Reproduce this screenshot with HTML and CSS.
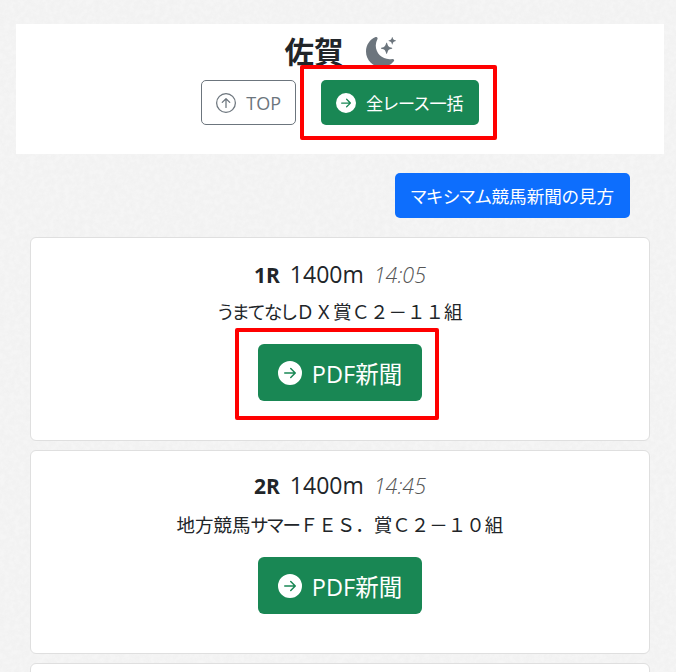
FILE: index.html
```html
<!DOCTYPE html>
<html lang="ja">
<head>
    <meta charset="UTF-8">
    <meta name="viewport" content="width=device-width, initial-scale=1.0">
    <title>佐賀</title>
    <link rel="stylesheet" href="styles.css">
</head>
<body>
    <div class="container">
        <header class="venue">
            <h1 class="venue-title">
                佐賀
                <svg class="moon" viewBox="0 0 16 16" fill="#6c757d">
                    <path d="M6 .278a.768.768 0 0 1 .08.858 7.208 7.208 0 0 0-.878 3.46c0 4.021 3.278 7.277 7.318 7.277.527 0 1.04-.055 1.533-.16a.787.787 0 0 1 .81.316.733.733 0 0 1-.031.893A8.349 8.349 0 0 1 8.344 16C3.734 16 0 12.286 0 7.71 0 4.266 2.114 1.312 5.124.06A.752.752 0 0 1 6 .278z"/>
                    <path d="M10.794 3.148a.217.217 0 0 1 .412 0l.387 1.162c.173.518.579.924 1.097 1.097l1.162.387a.217.217 0 0 1 0 .412l-1.162.387a1.734 1.734 0 0 0-1.097 1.097l-.387 1.162a.217.217 0 0 1-.412 0l-.387-1.162A1.734 1.734 0 0 0 9.31 6.593l-1.162-.387a.217.217 0 0 1 0-.412l1.162-.387a1.734 1.734 0 0 0 1.097-1.097l.387-1.162zM13.863.099a.145.145 0 0 1 .274 0l.258.774c.115.346.386.617.732.732l.774.258a.145.145 0 0 1 0 .274l-.774.258a1.156 1.156 0 0 0-.732.732l-.258.774a.145.145 0 0 1-.274 0l-.258-.774a1.156 1.156 0 0 0-.732-.732l-.774-.258a.145.145 0 0 1 0-.274l.774-.258c.346-.115.617-.386.732-.732L13.863.1z"/>
                </svg>
            </h1>
            <div class="venue-actions">
                <a class="btn btn-outline" href="#">
                    <svg class="btn-icon" viewBox="0 0 16 16" fill="currentColor">
                        <path fill-rule="evenodd" d="M1 8a7 7 0 1 0 14 0A7 7 0 0 0 1 8zm15 0A8 8 0 1 1 0 8a8 8 0 0 1 16 0zm-7.5 3.5a.5.5 0 0 1-1 0V5.707L5.354 7.854a.5.5 0 1 1-.708-.708l3-3a.5.5 0 0 1 .708 0l3 3a.5.5 0 0 1-.708.708L8.5 5.707V11.5z"/>
                    </svg>
                    TOP
                </a>
                <a class="btn btn-green btn-all" href="#">
                    <svg class="btn-icon" viewBox="0 0 16 16" fill="currentColor">
                        <path d="M8 0a8 8 0 1 1 0 16A8 8 0 0 1 8 0zM4.5 7.5a.5.5 0 0 0 0 1h5.793l-2.147 2.146a.5.5 0 0 0 .708.708l3-3a.5.5 0 0 0 0-.708l-3-3a.5.5 0 1 0-.708.708L10.293 7.5H4.5z"/>
                    </svg>
                    全レース一括
                </a>
            </div>
        </header>

        <div class="guide-row">
            <a class="btn btn-blue" href="#">マキシマム競馬新聞の見方</a>
        </div>

        <section class="race-card">
            <h2 class="race-title"><b>1R</b> 1400m <i class="race-time">14:05</i></h2>
            <p class="race-name"><span class="kana">うまてなし</span>ＤＸ賞Ｃ２－１１組</p>
            <a class="btn btn-green btn-lg" href="#">
                <svg class="btn-icon" viewBox="0 0 16 16" fill="currentColor">
                    <path d="M8 0a8 8 0 1 1 0 16A8 8 0 0 1 8 0zM4.5 7.5a.5.5 0 0 0 0 1h5.793l-2.147 2.146a.5.5 0 0 0 .708.708l3-3a.5.5 0 0 0 0-.708l-3-3a.5.5 0 1 0-.708.708L10.293 7.5H4.5z"/>
                </svg>
                PDF新聞
            </a>
        </section>

        <section class="race-card race-card-second">
            <h2 class="race-title"><b>2R</b> 1400m <i class="race-time">14:45</i></h2>
            <p class="race-name">地方競馬<span class="kana">サマー</span>ＦＥＳ．賞Ｃ２－１０組</p>
            <a class="btn btn-green btn-lg" href="#">
                <svg class="btn-icon" viewBox="0 0 16 16" fill="currentColor">
                    <path d="M8 0a8 8 0 1 1 0 16A8 8 0 0 1 8 0zM4.5 7.5a.5.5 0 0 0 0 1h5.793l-2.147 2.146a.5.5 0 0 0 .708.708l3-3a.5.5 0 0 0 0-.708l-3-3a.5.5 0 1 0-.708.708L10.293 7.5H4.5z"/>
                </svg>
                PDF新聞
            </a>
        </section>

        <section class="race-card"></section>
    </div>

    <!-- red marks drawn over the screenshot -->
    <div class="mark mark-all"></div>
    <div class="mark mark-pdf"></div>
</body>
</html>
```

FILE: styles.css
```css
html, body {
    height: 100%;
    overflow: hidden;
}
body {
    font-family: "Open Sans", "Noto Sans CJK JP", sans-serif;
    background-color: #f5f5f5;
    background-image: url("data:image/svg+xml,%3Csvg xmlns='http://www.w3.org/2000/svg' width='300' height='300'%3E%3Cfilter id='n'%3E%3CfeTurbulence type='fractalNoise' baseFrequency='.2' numOctaves='3'/%3E%3CfeColorMatrix values='0 0 0 0 .5 0 0 0 0 .5 0 0 0 0 .5 .14 0 0 0 -.04'/%3E%3C/filter%3E%3Crect width='300' height='300' filter='url(%23n)'/%3E%3C/svg%3E");
    color: #212529;
    margin: 0;
    position: relative;
}
.container {
    padding: 24px 12px 0 16px;
}
.venue {
    background-color: #fff;
    height: 130px;
    box-sizing: border-box;
    padding-top: 9px;
    text-align: center;
}
.venue-title {
    margin: 0 0 6px;
    font-size: 29.5px;
    line-height: 38px;
    font-weight: 700;
    display: flex;
    justify-content: center;
    align-items: center;
    gap: 22px;
}
.moon {
    width: 30px;
    height: 30px;
}
.venue-actions {
    display: flex;
    justify-content: center;
    gap: 25px;
    margin-top: 9px;
}
.btn {
    display: inline-flex;
    align-items: center;
    justify-content: center;
    box-sizing: border-box;
    height: 45px;
    padding: 0 14px;
    border: 1px solid transparent;
    border-radius: 5px;
    font-size: 18px;
    font-feature-settings: "palt";
    text-decoration: none;
    white-space: nowrap;
}
.btn-icon {
    width: 20px;
    height: 20px;
    margin-right: 10px;
}
.btn-outline {
    color: #6c757d;
    border-color: #6c757d;
    background-color: #fff;
}
.btn-green {
    color: #fff;
    background-color: #198754;
}
.btn-all {
    font-size: 17.1px;
}
.btn-blue {
    color: #fff;
    background-color: #0d6efd;
    padding: 0 15px;
    font-size: 17.6px;
}
.btn-lg {
    height: 57px;
    padding: 0 19px;
    border-radius: 6px;
    font-size: 23.5px;
}
.btn-lg .btn-icon {
    width: 24px;
    height: 24px;
}
.guide-row {
    display: flex;
    justify-content: flex-end;
    padding: 19px 20px 19px 0;
    margin-right: 14px;
}
.race-card {
    background-color: #fff;
    border: 1px solid #dfdfdf;
    border-radius: 6px;
    margin: 0 14px 9.5px;
    height: 203.5px;
    box-sizing: border-box;
    padding-top: 19px;
    text-align: center;
}
.race-card-second {
    padding-top: 17px;
}
.race-title {
    margin: 0;
    font-size: 23px;
    line-height: 34px;
    font-weight: 400;
}
.race-title b {
    font-size: 21px;
    font-weight: 700;
    margin-right: 4px;
}
.race-time {
    font-size: 21.5px;
    font-weight: 300;
    color: #555;
    margin-left: 4px;
}
.race-name {
    margin: 7px 0 19px;
    font-size: 18.5px;
    line-height: 26px;
}
.race-card-second .race-name {
    margin-top: 9px;
}
.kana {
    font-feature-settings: "palt";
    letter-spacing: -1px;
}
.mark {
    position: absolute;
    box-sizing: border-box;
    border: 4px solid #f00;
    border-radius: 2px;
}
.mark-all {
    left: 300px;
    top: 65px;
    width: 197px;
    height: 75px;
}
.mark-pdf {
    left: 235px;
    top: 328px;
    width: 204px;
    height: 92px;
}
```
